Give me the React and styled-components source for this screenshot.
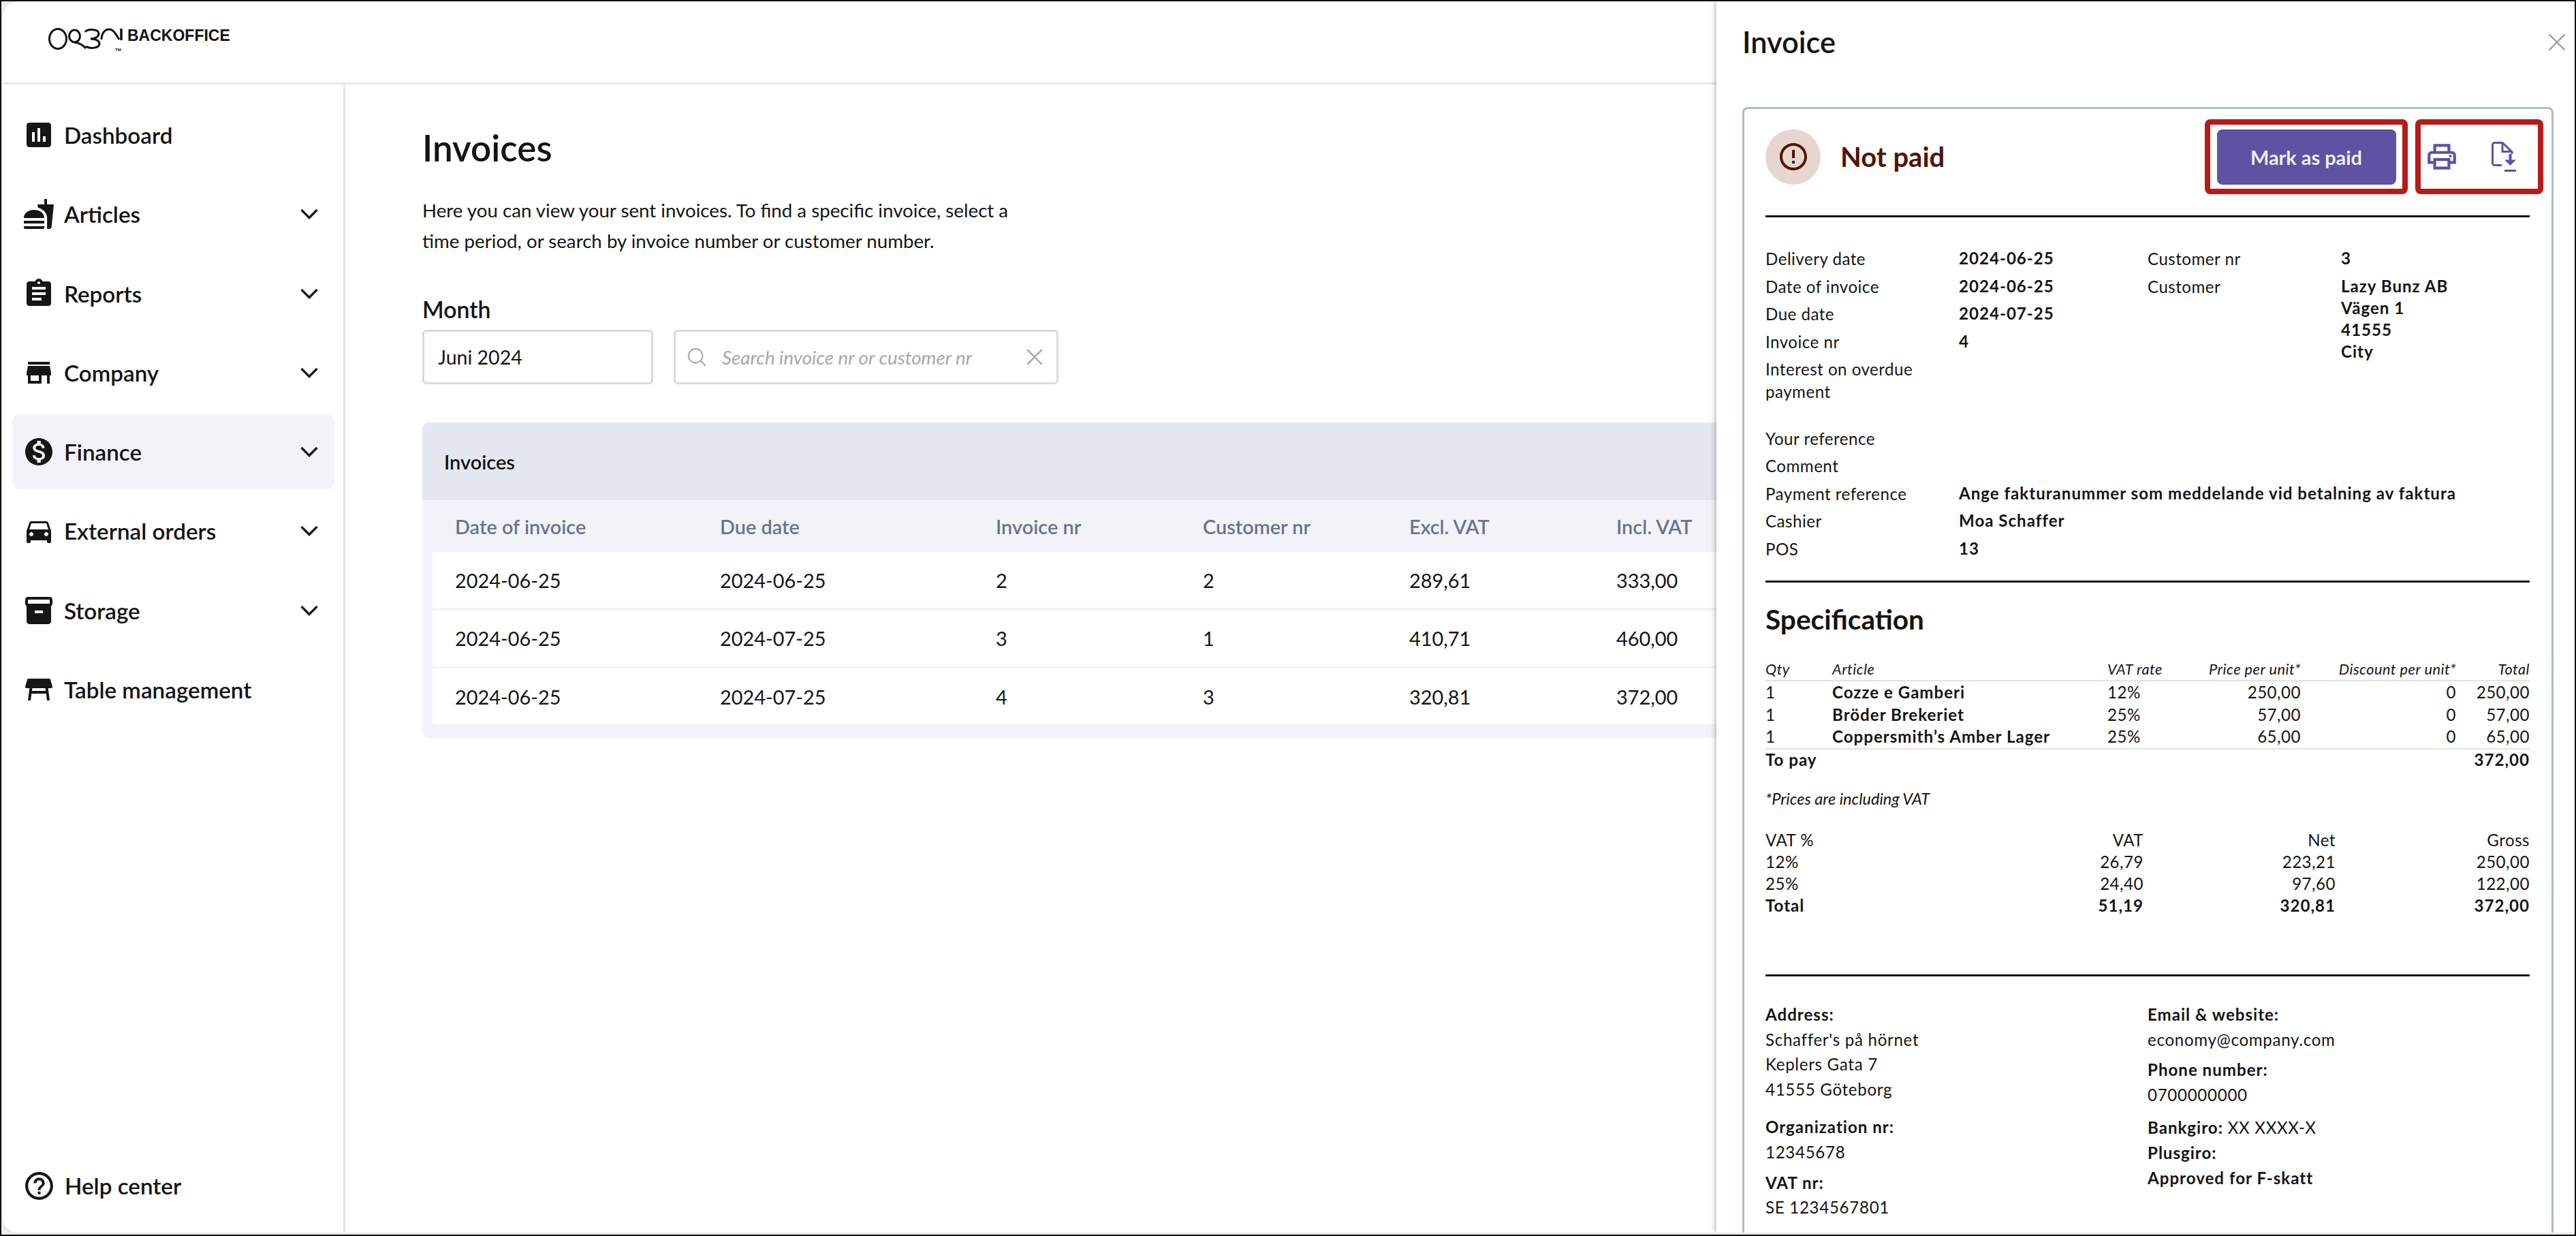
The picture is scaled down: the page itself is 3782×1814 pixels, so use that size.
import React from 'react';
import styled, { createGlobalStyle } from 'styled-components';
import {
    MdAssessment,
    MdFastfood,
    MdAssignment,
    MdStore,
    MdMonetizationOn,
    MdDirectionsCar,
    MdInventory2,
    MdTableRestaurant,
    MdHelpOutline,
    MdOutlinePrint,
    MdErrorOutline
} from 'react-icons/md';

const GlobalStyle = createGlobalStyle`
    html, body {
        margin: 0;
        padding: 0;
        background: #fff;
    }
    body {
        font-family: Lato, "Noto Sans", sans-serif;
        color: #141414;
    }
    * {
        box-sizing: border-box;
    }
`;

const Frame = styled.div`
    width: 3782px;
    height: 1814px;
    border: 2px solid #111;
    background: #ececec;
    overflow: hidden;
`;

const Shell = styled.div`
    position: relative;
    height: 100%;
    display: flex;
    flex-direction: column;
    background: #fff;
    border-left: 2px solid #e8e8e8;
    border-bottom: 3px solid #e8e8e8;
    border-radius: 24px 0 0 24px;
    overflow: hidden;
`;

const TopBar = styled.header`
    flex: 0 0 122px;
    display: flex;
    align-items: flex-start;
    gap: 4px;
    padding: 36px 0 0 67px;
    border-bottom: 3px solid #e3e7f0;
`;

const LogoWord = styled.span`
    font-family: "Liberation Sans", Arial, sans-serif;
    font-weight: 700;
    font-size: 23px;
    line-height: 28px;
    color: #111;
`;

const Body = styled.div`
    flex: 1;
    display: flex;
    min-height: 0;
`;

const Sidebar = styled.nav`
    flex: 0 0 503px;
    display: flex;
    flex-direction: column;
    justify-content: space-between;
    padding: 19px 13px 39px 14px;
    border-right: 3px solid #e3e7f0;
`;

const NavList = styled.div`
    display: flex;
    flex-direction: column;
    gap: 6.3px;
`;

const NavItem = styled.a`
    height: 110px;
    display: flex;
    align-items: center;
    gap: 13px;
    padding: 0 24px 0 15px;
    border-radius: 10px;
    font-size: 33.2px;
    font-weight: 600;
    color: #141414;
    background: ${props => (props.$active ? '#f2f3f8' : 'transparent')};

    svg.nav-icon {
        flex: 0 0 48px;
        width: 48px;
        height: 48px;
        color: #161616;
    }
`;

const NavLabel = styled.span`
    flex: 1;
`;

const HelpItem = styled(NavItem)`
    height: 60px;
    padding-left: 15px;

    svg.nav-icon {
        flex: 0 0 49px;
        width: 49px;
        height: 49px;
    }
`;

const Main = styled.main`
    flex: 1;
    min-width: 0;
    padding: 61px 0 0 113px;
`;

const Title = styled.h1`
    margin: 0;
    font-size: 53px;
    line-height: 64px;
    font-weight: 600;
`;

const Intro = styled.p`
    margin: 37px 0 0;
    width: 880px;
    font-size: 27.7px;
    line-height: 45px;
`;

const FieldLabel = styled.div`
    margin-top: 55px;
    font-size: 33.8px;
    line-height: 46px;
    font-weight: 600;
`;

const FilterRow = styled.div`
    display: flex;
    gap: 30px;
    margin-top: 7px;
`;

const MonthInput = styled.div`
    width: 339px;
    height: 80px;
    display: flex;
    align-items: center;
    padding: 0 20px;
    border: 3px solid #dadada;
    border-radius: 6px;
    font-size: 28.5px;
`;

const SearchInput = styled(MonthInput)`
    width: 565px;
    padding: 0 19px 0 17px;
    gap: 23px;
    color: #aaa;
`;

const Placeholder = styled.span`
    flex: 1;
    font-size: 27.7px;
    font-style: italic;
    color: #a8a8a8;
`;

const TableCard = styled.section`
    width: 3000px;
    margin-top: 56px;
    padding-bottom: 20px;
    background: #f2f3f8;
    border-radius: 10px;
    overflow: hidden;
`;

const CardTitle = styled.div`
    height: 114px;
    display: flex;
    align-items: center;
    padding-left: 32px;
    background: #e4e7f0;
    font-size: 28.9px;
    font-weight: 600;
`;

const GridRow = styled.div`
    display: grid;
    grid-template-columns: 389px 405px 304px 303px 304px 1fr;
    align-items: center;
    margin-left: 15px;
    padding-left: 33px;
`;

const HeadRow = styled(GridRow)`
    height: 76px;
    color: #6b7291;
    font-size: 28.9px;
    font-weight: 600;
`;

const DataRow = styled(GridRow)`
    height: 82px;
    margin-bottom: 3.6px;
    background: #fff;
    font-size: 28.9px;

    &:last-child {
        margin-bottom: 0;
    }
`;

const Drawer = styled.aside`
    position: absolute;
    top: 0;
    right: 0;
    bottom: 0;
    width: 1260px;
    padding: 0 31px 0 38px;
    background: #fff;
    box-shadow: -3px 0 6px rgba(0, 0, 0, 0.22);
`;

const DrawerHead = styled.div`
    height: 155px;
    display: flex;
    justify-content: space-between;
    padding-top: 30px;
`;

const DrawerTitle = styled.h2`
    margin: 0;
    font-size: 43.4px;
    line-height: 58px;
    font-weight: 600;
`;

const CloseButton = styled.span`
    margin: 16px -19px 0 0;
    color: #a2a2a2;
    line-height: 0;
`;

const Paper = styled.div`
    height: 1800px;
    padding: 15px 32px 0 31px;
    border: 3px solid #b0b9d3;
    border-radius: 8px;
`;

const StatusRow = styled.div`
    display: flex;
    align-items: center;
    height: 110px;
`;

const StatusDot = styled.span`
    flex: 0 0 81px;
    height: 81px;
    display: flex;
    align-items: center;
    justify-content: center;
    border-radius: 50%;
    background: #e7d6d0;
    color: #4f1700;
`;

const StatusText = styled.span`
    flex: 1;
    margin-left: 29px;
    font-size: 40px;
    font-weight: 700;
    color: #4f1500;
`;

const Marked = styled.div`
    height: 110px;
    display: flex;
    align-items: center;
    border: 8px solid #b81a1a;
    border-radius: 8px;
`;

const ButtonMark = styled(Marked)`
    width: 298px;
    justify-content: center;
`;

const IconMark = styled(Marked)`
    width: 188px;
    margin: 0 -20px 0 11px;
    padding-left: 6px;
    gap: 48px;
    color: #5e52a2;
`;

const PayButton = styled.button`
    width: 263px;
    height: 81px;
    border: 0;
    border-radius: 8px;
    background: #5e52a2;
    color: #eeeef4;
    font-family: inherit;
    font-size: 28.9px;
    font-weight: 700;
`;

const Rule = styled.div`
    height: 3px;
    background: #141414;
    margin-top: ${props => props.$top}px;
`;

const InfoColumns = styled.div`
    display: grid;
    grid-template-columns: 561px 1fr;
    margin-top: 44px;
`;

const InfoRow = styled.div`
    display: grid;
    grid-template-columns: 284px 1fr;
    margin-bottom: 7.5px;
    font-size: 24.1px;
    line-height: 33px;
    letter-spacing: 0.5px;
`;

const InfoValue = styled.div`
    font-weight: 700;
    line-height: 32px;
    letter-spacing: 1px;
`;

const WideInfo = styled.div`
    margin-top: 28px;
`;

const SectionTitle = styled.h3`
    margin: 30px 0 0;
    font-size: 40.6px;
    line-height: 48px;
    font-weight: 700;
`;

const SpecRow = styled.div`
    display: grid;
    grid-template-columns: 98px 404px 120px 164px 228px 108px;
    font-size: 24.1px;
    line-height: 32.5px;
    letter-spacing: 0.5px;
`;

const SpecHead = styled(SpecRow)`
    margin-top: 33px;
    border-bottom: 2px solid #e2e2e2;
    font-size: 21.7px;
    font-style: italic;
`;

const SpecFoot = styled(SpecRow)`
    border-top: 2px solid #e2e2e2;
    font-weight: 700;
    line-height: 30.5px;
    letter-spacing: 1px;
`;

const Cell = styled.div`
    text-align: ${props => (props.$right ? 'right' : 'left')};
    font-weight: ${props => (props.$bold ? 700 : 'inherit')};
    letter-spacing: ${props => (props.$bold ? '1px' : 'inherit')};
    grid-column: ${props => props.$span || 'auto'};
`;

const PriceNote = styled.div`
    margin-top: 26px;
    font-size: 23.5px;
    font-style: italic;
    line-height: 32px;
`;

const VatRow = styled.div`
    display: grid;
    grid-template-columns: 400px 155px 282px 285px;
    font-size: 24.1px;
    line-height: 32px;
    letter-spacing: ${props => (props.$bold ? '1px' : '0.5px')};
    font-weight: ${props => (props.$bold ? 700 : 400)};
`;

const VatTable = styled.div`
    margin-top: 29px;
`;

const FooterColumns = styled.div`
    display: grid;
    grid-template-columns: 561px 1fr;
    margin-top: 38px;
`;

const FooterLine = styled.div`
    font-size: 24.1px;
    line-height: 36.6px;
    letter-spacing: ${props => (props.$bold ? '1px' : '0.7px')};
    font-weight: ${props => (props.$bold ? 700 : 400)};
    margin-top: ${props => props.$top || 0}px;

    b {
        font-weight: 700;
        letter-spacing: 1px;
    }
`;

const Chevron = () => (
    <svg width="26" height="16" viewBox="0 0 26 16" fill="none" stroke="#1b1b1b" strokeWidth="3.4">
        <polyline points="1.5,2 13,13.5 24.5,2" />
    </svg>
);

const Logo = () => (
    <svg width="112" height="40" viewBox="0 0 112 40" fill="none" stroke="#111" strokeWidth="3">
        <ellipse cx="14" cy="19" rx="12.5" ry="14.5" />
        <ellipse cx="38.500" cy="15" rx="8" ry="9" />
        <path d="M39 24c5 1 11 3 16 9" />
        <path d="M54 9c3-5 19-5 20 2 0 5-5 8-12 8 8 0 13 3 13 7 0 7-14 8-20 4" />
        <path d="M78 20c0-9 5-15 11-15 6 0 9 5 15 15" />
        <path d="M107 4v17" strokeWidth="3.5" />
        <text x="98" y="37" fontSize="6" fontWeight="700" fontFamily="Liberation Sans" fill="#111" stroke="none">TM</text>
    </svg>
);

const FileDownload = () => (
    <svg width="36" height="44" viewBox="0 0 36 44" fill="none" stroke="currentColor" strokeWidth="3">
        <path d="M15 34.500H4.500a3 3 0 0 1-3-3v-27a3 3 0 0 1 3-3H16l14 13.500V18" />
        <path d="M16 2v12.500h14" />
        <path d="M27.500 18v12" strokeWidth="4" />
        <path d="M19 26.500h17l-8.500 8.500z" fill="currentColor" stroke="none" />
        <path d="M19 42.500h17" />
    </svg>
);

const Cross = ({ size, weight }) => (
    <svg width={size} height={size} viewBox="0 0 24 24" fill="none" stroke="currentColor" strokeWidth={weight}>
        <path d="M2 2l20 20M22 2L2 22" />
    </svg>
);

const navItems = [
    { label: 'Dashboard', icon: MdAssessment, plain: true },
    { label: 'Articles', icon: MdFastfood },
    { label: 'Reports', icon: MdAssignment },
    { label: 'Company', icon: MdStore },
    { label: 'Finance', icon: MdMonetizationOn, active: true },
    { label: 'External orders', icon: MdDirectionsCar },
    { label: 'Storage', icon: MdInventory2 },
    { label: 'Table management', icon: MdTableRestaurant, plain: true }
];

const invoices = [
    ['2024-06-25', '2024-06-25', '2', '2', '289,61', '333,00'],
    ['2024-06-25', '2024-07-25', '3', '1', '410,71', '460,00'],
    ['2024-06-25', '2024-07-25', '4', '3', '320,81', '372,00']
];

const articles = [
    ['1', 'Cozze e Gamberi', '12%', '250,00', '0', '250,00'],
    ['1', 'Bröder Brekeriet', '25%', '57,00', '0', '57,00'],
    ['1', 'Coppersmith’s Amber Lager', '25%', '65,00', '0', '65,00']
];

const vatLines = [
    ['VAT %', 'VAT', 'Net', 'Gross'],
    ['12%', '26,79', '223,21', '250,00'],
    ['25%', '24,40', '97,60', '122,00'],
    ['Total', '51,19', '320,81', '372,00']
];

const App = () => (
    <Frame>
        <GlobalStyle />
        <Shell>
            <TopBar>
                <Logo />
                <LogoWord>BACKOFFICE</LogoWord>
            </TopBar>
            <Body>
                <Sidebar>
                    <NavList>
                        {navItems.map(({ label, icon: Icon, active, plain }) => (
                            <NavItem key={label} $active={active}>
                                <Icon className="nav-icon" />
                                <NavLabel>{label}</NavLabel>
                                {!plain && <Chevron />}
                            </NavItem>
                        ))}
                    </NavList>
                    <HelpItem>
                        <MdHelpOutline className="nav-icon" />
                        <NavLabel>Help center</NavLabel>
                    </HelpItem>
                </Sidebar>
                <Main>
                    <Title>Invoices</Title>
                    <Intro>
                        Here you can view your sent invoices. To find a specific invoice, select a time period, or
                        search by invoice number or customer number.
                    </Intro>
                    <FieldLabel>Month</FieldLabel>
                    <FilterRow>
                        <MonthInput>Juni 2024</MonthInput>
                        <SearchInput>
                            <svg width="28" height="28" viewBox="0 0 30 30" fill="none" stroke="#a8a8a8" strokeWidth="2.200">
                                <circle cx="13" cy="13" r="11" />
                                <path d="M21 21l8 8" />
                            </svg>
                            <Placeholder>Search invoice nr or customer nr</Placeholder>
                            <Cross size={26} weight={2.4} />
                        </SearchInput>
                    </FilterRow>
                    <TableCard>
                        <CardTitle>Invoices</CardTitle>
                        <HeadRow>
                            <div>Date of invoice</div>
                            <div>Due date</div>
                            <div>Invoice nr</div>
                            <div>Customer nr</div>
                            <div>Excl. VAT</div>
                            <div>Incl. VAT</div>
                        </HeadRow>
                        {invoices.map(row => (
                            <DataRow key={row[2]}>
                                {row.map((value, i) => (
                                    <div key={i}>{value}</div>
                                ))}
                            </DataRow>
                        ))}
                    </TableCard>
                </Main>
            </Body>
            <Drawer>
                <DrawerHead>
                    <DrawerTitle>Invoice</DrawerTitle>
                    <CloseButton>
                        <Cross size={28} weight={2} />
                    </CloseButton>
                </DrawerHead>
                <Paper>
                    <StatusRow>
                        <StatusDot>
                            <MdErrorOutline size={48} />
                        </StatusDot>
                        <StatusText>Not paid</StatusText>
                        <ButtonMark>
                            <PayButton>Mark as paid</PayButton>
                        </ButtonMark>
                        <IconMark>
                            <MdOutlinePrint size={50} />
                            <FileDownload />
                        </IconMark>
                    </StatusRow>
                    <Rule $top={31} />
                    <InfoColumns>
                        <div>
                            <InfoRow><div>Delivery date</div><InfoValue>2024-06-25</InfoValue></InfoRow>
                            <InfoRow><div>Date of invoice</div><InfoValue>2024-06-25</InfoValue></InfoRow>
                            <InfoRow><div>Due date</div><InfoValue>2024-07-25</InfoValue></InfoRow>
                            <InfoRow><div>Invoice nr</div><InfoValue>4</InfoValue></InfoRow>
                            <InfoRow><div>Interest on overdue payment</div><InfoValue /></InfoRow>
                        </div>
                        <div>
                            <InfoRow><div>Customer nr</div><InfoValue>3</InfoValue></InfoRow>
                            <InfoRow>
                                <div>Customer</div>
                                <InfoValue>Lazy Bunz AB<br />Vägen 1<br />41555<br />City</InfoValue>
                            </InfoRow>
                        </div>
                    </InfoColumns>
                    <WideInfo>
                        <InfoRow><div>Your reference</div><InfoValue /></InfoRow>
                        <InfoRow><div>Comment</div><InfoValue /></InfoRow>
                        <InfoRow>
                            <div>Payment reference</div>
                            <InfoValue>Ange fakturanummer som meddelande vid betalning av faktura</InfoValue>
                        </InfoRow>
                        <InfoRow><div>Cashier</div><InfoValue>Moa Schaffer</InfoValue></InfoRow>
                        <InfoRow><div>POS</div><InfoValue>13</InfoValue></InfoRow>
                    </WideInfo>
                    <Rule $top={30} />
                    <SectionTitle>Specification</SectionTitle>
                    <SpecHead>
                        <Cell>Qty</Cell>
                        <Cell>Article</Cell>
                        <Cell>VAT rate</Cell>
                        <Cell $right>Price per unit*</Cell>
                        <Cell $right>Discount per unit*</Cell>
                        <Cell $right>Total</Cell>
                    </SpecHead>
                    {articles.map(row => (
                        <SpecRow key={row[1]}>
                            <Cell>{row[0]}</Cell>
                            <Cell $bold>{row[1]}</Cell>
                            <Cell>{row[2]}</Cell>
                            <Cell $right>{row[3]}</Cell>
                            <Cell $right>{row[4]}</Cell>
                            <Cell $right>{row[5]}</Cell>
                        </SpecRow>
                    ))}
                    <SpecFoot>
                        <Cell $span="1 / 6">To pay</Cell>
                        <Cell $right>372,00</Cell>
                    </SpecFoot>
                    <PriceNote>*Prices are including VAT</PriceNote>
                    <VatTable>
                        {vatLines.map(row => (
                            <VatRow key={row[0]} $bold={row[0] === 'Total'}>
                                <Cell>{row[0]}</Cell>
                                <Cell $right>{row[1]}</Cell>
                                <Cell $right>{row[2]}</Cell>
                                <Cell $right>{row[3]}</Cell>
                            </VatRow>
                        ))}
                    </VatTable>
                    <Rule $top={85} />
                    <FooterColumns>
                        <div>
                            <FooterLine $bold>Address:</FooterLine>
                            <FooterLine>Schaffer's på hörnet</FooterLine>
                            <FooterLine>Keplers Gata 7</FooterLine>
                            <FooterLine>41555 Göteborg</FooterLine>
                            <FooterLine $bold $top={19}>Organization nr:</FooterLine>
                            <FooterLine>12345678</FooterLine>
                            <FooterLine $bold $top={8}>VAT nr:</FooterLine>
                            <FooterLine>SE 1234567801</FooterLine>
                        </div>
                        <div>
                            <FooterLine $bold>Email &amp; website:</FooterLine>
                            <FooterLine>economy@company.com</FooterLine>
                            <FooterLine $bold $top={8}>Phone number:</FooterLine>
                            <FooterLine>0700000000</FooterLine>
                            <FooterLine $top={12}><b>Bankgiro:</b> XX XXXX-X</FooterLine>
                            <FooterLine $bold>Plusgiro:</FooterLine>
                            <FooterLine $bold>Approved for F-skatt</FooterLine>
                        </div>
                    </FooterColumns>
                </Paper>
            </Drawer>
        </Shell>
    </Frame>
);

export default App;
